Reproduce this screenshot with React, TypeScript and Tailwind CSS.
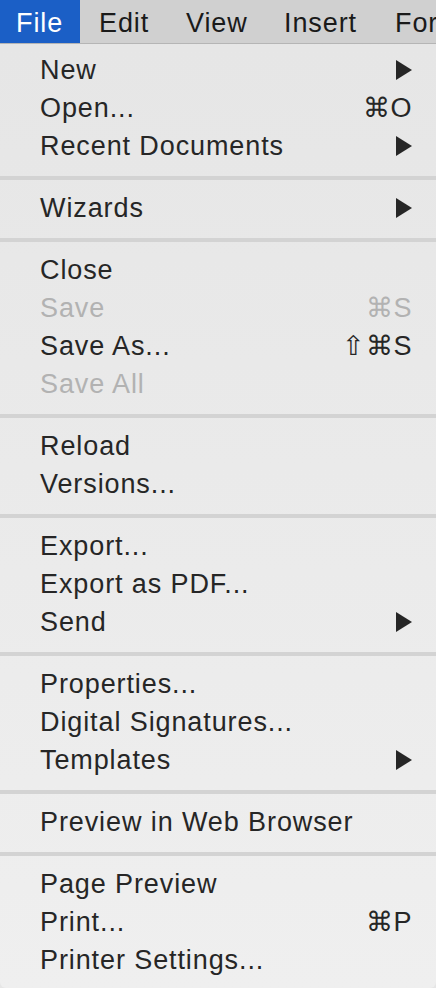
import type { ReactNode } from "react";

type Item = {
  label: string;
  shortcut?: ReactNode;
  submenu?: boolean;
  disabled?: boolean;
};

const GROUPS: Item[][] = [
  [
    { label: "New", submenu: true },
    { label: "Open...", shortcut: "⌘O" },
    { label: "Recent Documents", submenu: true },
  ],
  [{ label: "Wizards", submenu: true }],
  [
    { label: "Close" },
    { label: "Save", shortcut: "⌘S", disabled: true },
    { label: "Save As...", shortcut: "⇧⌘S" },
    { label: "Save All", disabled: true },
  ],
  [{ label: "Reload" }, { label: "Versions..." }],
  [
    { label: "Export..." },
    { label: "Export as PDF..." },
    { label: "Send", submenu: true },
  ],
  [
    { label: "Properties..." },
    { label: "Digital Signatures..." },
    { label: "Templates", submenu: true },
  ],
  [{ label: "Preview in Web Browser" }],
  [
    { label: "Page Preview" },
    { label: "Print...", shortcut: "⌘P" },
    { label: "Printer Settings..." },
  ],
];

// menu bar titles, each box starts where the previous one ends
const MENUS = [
  { label: "File", active: true, cls: "w-[80px] pl-[16px]" },
  { label: "Edit", cls: "w-[106px] pl-[19px]" },
  { label: "View", cls: "w-[98px]" },
  { label: "Insert", cls: "w-[111px]" },
  { label: "Format", cls: "w-[120px]" },
];

export default function App() {
  return (
    <div className="h-[988px] w-[436px] overflow-hidden bg-[#e6e6e6] font-['Liberation_Sans',Arial,sans-serif] text-[27px] tracking-[0.9px] text-[#222]">
      <div className="flex h-[44px] items-stretch overflow-hidden whitespace-nowrap border-b border-[#b5b5b5] bg-[#d0d0d0]">
        {MENUS.map((m) => (
          <div
            key={m.label}
            className={`flex h-full shrink-0 items-center pt-[3px] ${m.cls} ${
              m.active ? "bg-[#1b5fc6] text-white" : "text-[#1a1a1a]"
            }`}
          >
            {m.label}
          </div>
        ))}
      </div>

      <div className="rounded-b-[6px] bg-gradient-to-b from-[#e6e6e6] to-[#efefef] pt-[7px] pb-[9px]">
        {GROUPS.map((group, gi) => (
          <div key={gi}>
            {gi > 0 && (
              <div className="flex h-[24px] flex-col pt-[11px]">
                <div className="h-[4px] bg-[#d3d3d3]" />
              </div>
            )}
            {group.map((item) => (
              <MenuRow key={item.label} item={item} />
            ))}
          </div>
        ))}
      </div>
    </div>
  );
}

function MenuRow({ item }: { item: Item }) {
  return (
    <div
      className={`flex h-[38px] items-center justify-between pl-[40px] pr-[24px] leading-none ${
        item.disabled ? "text-[#b2b2b2]" : "text-[#262626]"
      }`}
    >
      <span>{item.label}</span>
      {item.shortcut && <span className="tracking-[0.5px]">{item.shortcut}</span>}
      {item.submenu && <SubmenuArrow />}
    </div>
  );
}

function SubmenuArrow() {
  return (
    <svg width="16" height="20" viewBox="0 0 16 20" className="shrink-0">
      <path d="M0 0 L16 10 L0 20 Z" fill="#262626" />
    </svg>
  );
}
